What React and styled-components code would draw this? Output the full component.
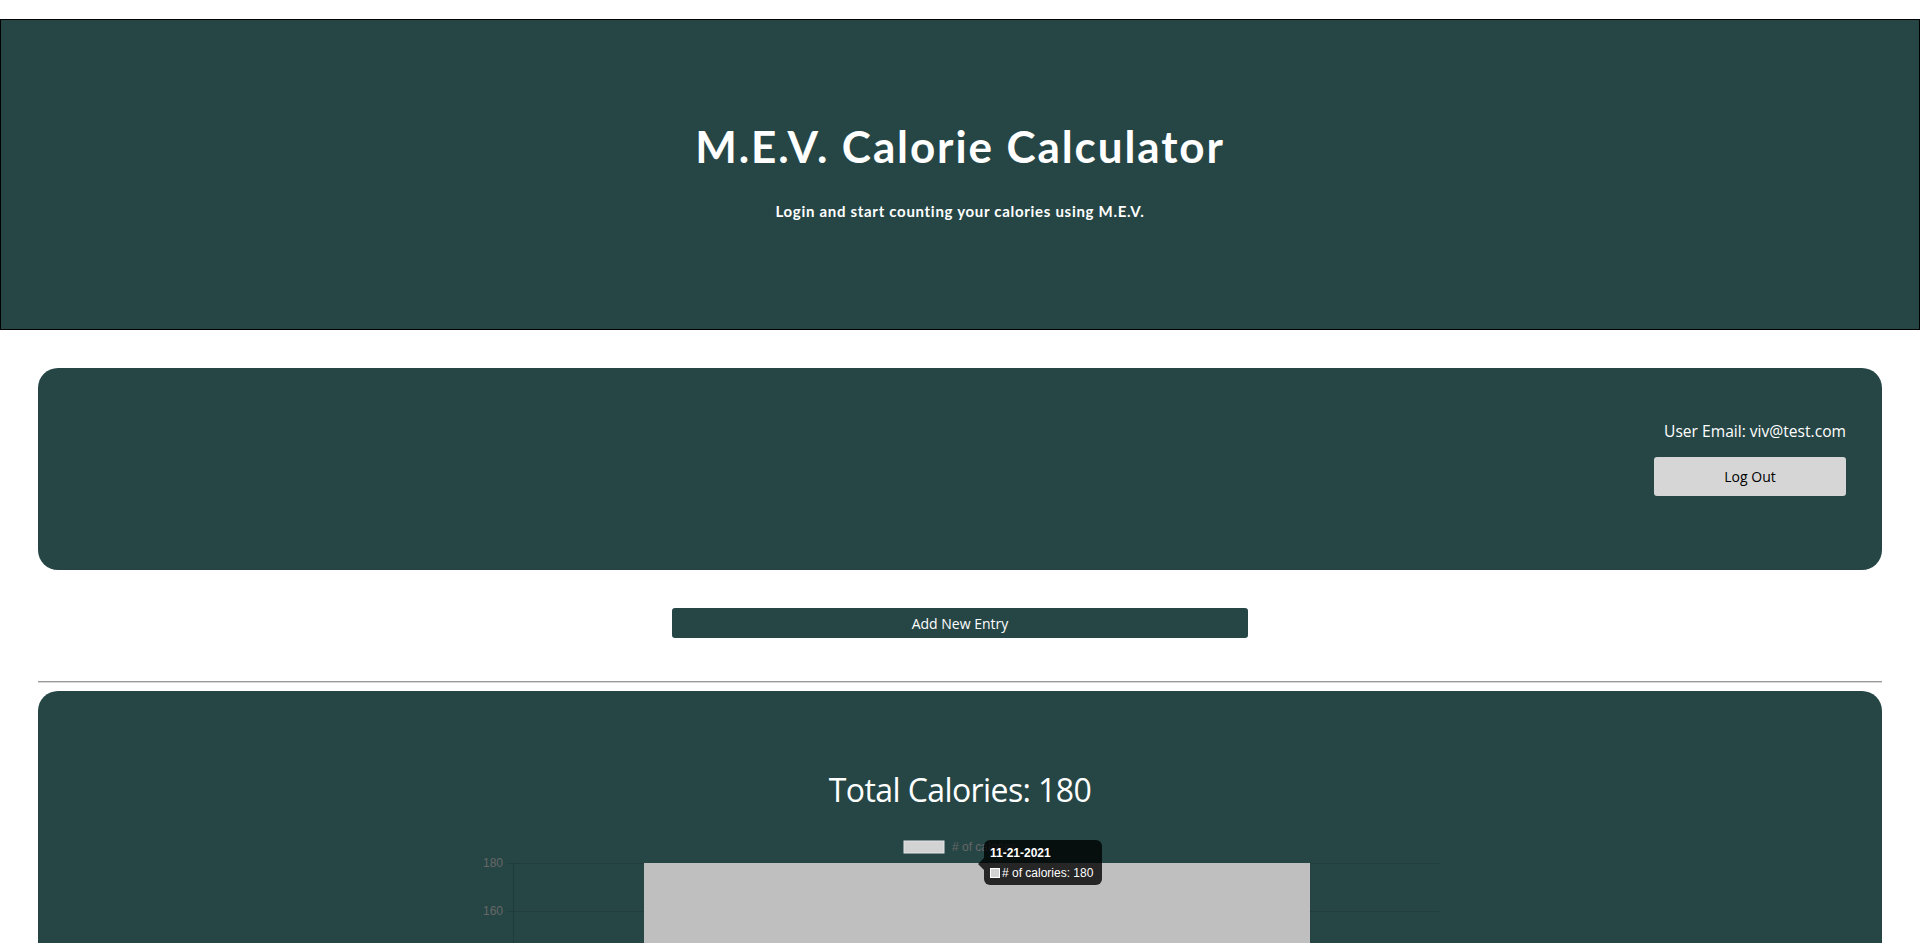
import React from "react";
import styled, { createGlobalStyle } from "styled-components";

const TEAL = "#264646";

const Global = createGlobalStyle`
  html, body { margin: 0; padding: 0; background: #fff; }
  body { font-family: "Open Sans", "Noto Sans", sans-serif; }
  * { box-sizing: border-box; }
`;

const Header = styled.header`
  margin-top: 19px;
  height: 311px;
  background: ${TEAL};
  border: 1px solid #000;
  display: flex;
  flex-direction: column;
  align-items: center;
  justify-content: center;
  gap: 30px;
  color: #fff;
  padding-bottom: 7px;
`;

const Title = styled.h1`
  margin: 0;
  font-family: "Lato", "Open Sans", sans-serif;
  font-weight: 700;
  font-size: 44px;
  line-height: 50px;
  letter-spacing: 1.9px;
`;

const Subtitle = styled.p`
  margin: 0;
  font-family: "Lato", "Open Sans", sans-serif;
  font-weight: 700;
  font-size: 15px;
  line-height: 20px;
  letter-spacing: 0.7px;
`;

const Main = styled.main`
  padding: 38px 38px 0;
  display: flex;
  flex-direction: column;
`;

const Panel = styled.section`
  background: ${TEAL};
  border-radius: 20px;
  color: #fff;
`;

const UserPanel = styled(Panel)`
  height: 202px;
  padding: 52px 36px 0;
  display: flex;
  flex-direction: column;
  align-items: flex-end;
`;

const UserEmail = styled.div`
  font-size: 15.6px;
  line-height: 22px;
  margin-bottom: 15px;
`;

const LogOutButton = styled.button`
  width: 192px;
  height: 39px;
  border: none;
  border-radius: 3px;
  background: #d6d6d6;
  color: #000;
  font-family: "Open Sans", sans-serif;
  font-size: 14px;
  cursor: pointer;
`;

const AddRow = styled.div`
  display: flex;
  justify-content: center;
  margin-top: 38px;
`;

const AddButton = styled.button`
  width: 576px;
  height: 30px;
  border: none;
  border-radius: 3px;
  background: ${TEAL};
  color: #fff;
  font-family: "Open Sans", sans-serif;
  font-size: 14px;
  cursor: pointer;
`;

const Divider = styled.hr`
  margin: 43px 0 8px;
  border: none;
  border-top: 1px solid #999;
  border-bottom: 1px solid #d8d8d8;
  height: 0;
`;

const ChartPanel = styled(Panel)`
  min-height: 700px;
  padding-top: 79px;
  display: flex;
  flex-direction: column;
  align-items: center;
`;

const TotalTitle = styled.h2`
  margin: 0;
  font-size: 32px;
  line-height: 40px;
  font-weight: 400;
  letter-spacing: -0.6px;
`;

const ChartBox = styled.div`
  position: relative;
  width: 980px;
  margin-top: 21px;
`;

const Tooltip = styled.div`
  position: absolute;
  left: 514px;
  top: 9px;
  width: 118px;
  padding: 6px 6px 5px;
  border-radius: 6px;
  background: rgba(0, 0, 0, 0.8);
  color: #fff;
  font-family: "Liberation Sans", Arial, sans-serif;
  font-size: 12px;
  line-height: 14px;

  &::before {
    content: "";
    position: absolute;
    left: -6px;
    top: 18px;
    border-top: 6px solid transparent;
    border-bottom: 6px solid transparent;
    border-right: 6px solid rgba(0, 0, 0, 0.8);
  }
`;

const TipTitle = styled.div`
  font-weight: 700;
  margin-bottom: 6px;
`;

const TipRow = styled.div`
  display: flex;
  align-items: center;
  gap: 2px;
  white-space: nowrap;
`;

const Swatch = styled.span`
  display: inline-block;
  width: 10px;
  height: 10px;
  background: #d3d3d3;
  border: 1px solid #fff;
`;

function BarChart() {
  const gridYs = [];
  for (let v = 180, i = 0; v >= 0; v -= 20, i++) gridYs.push({ v, y: 32 + i * 48 });
  return (
    <ChartBox>
      <svg width="980" height="480" viewBox="0 0 980 480" style={{ display: "block" }}>
        <rect x="434" y="10" width="40" height="12" fill="#d3d3d3" stroke="#e6e6e6" strokeWidth="1" />
        <text x="482" y="20" fontFamily="Liberation Sans, Arial, sans-serif" fontSize="12" fill="#666">
          # of calories
        </text>
        {gridYs.map((g) => (
          <g key={g.v}>
            <line x1="37" x2="969" y1={g.y + 0.5} y2={g.y + 0.5} stroke="rgba(0,0,0,0.12)" strokeWidth="1" />
            <text
              x="33"
              y={g.y + 4}
              textAnchor="end"
              fontFamily="Liberation Sans, Arial, sans-serif"
              fontSize="12"
              fill="#666"
            >
              {g.v}
            </text>
          </g>
        ))}
        <line x1="43.5" x2="43.5" y1="32" y2="480" stroke="rgba(0,0,0,0.15)" strokeWidth="1" />
        <rect x="174" y="32" width="666" height="448" fill="#bfbfbf" />
      </svg>
      <Tooltip>
        <TipTitle>11-21-2021</TipTitle>
        <TipRow>
          <Swatch />
          <span># of calories: 180</span>
        </TipRow>
      </Tooltip>
    </ChartBox>
  );
}

export default function App() {
  return (
    <>
      <Global />
      <Header>
        <Title>M.E.V. Calorie Calculator</Title>
        <Subtitle>Login and start counting your calories using M.E.V.</Subtitle>
      </Header>
      <Main>
        <UserPanel>
          <UserEmail>User Email: viv@test.com</UserEmail>
          <LogOutButton>Log Out</LogOutButton>
        </UserPanel>
        <AddRow>
          <AddButton>Add New Entry</AddButton>
        </AddRow>
        <Divider />
        <ChartPanel>
          <TotalTitle>Total Calories: 180</TotalTitle>
          <BarChart />
        </ChartPanel>
      </Main>
    </>
  );
}
